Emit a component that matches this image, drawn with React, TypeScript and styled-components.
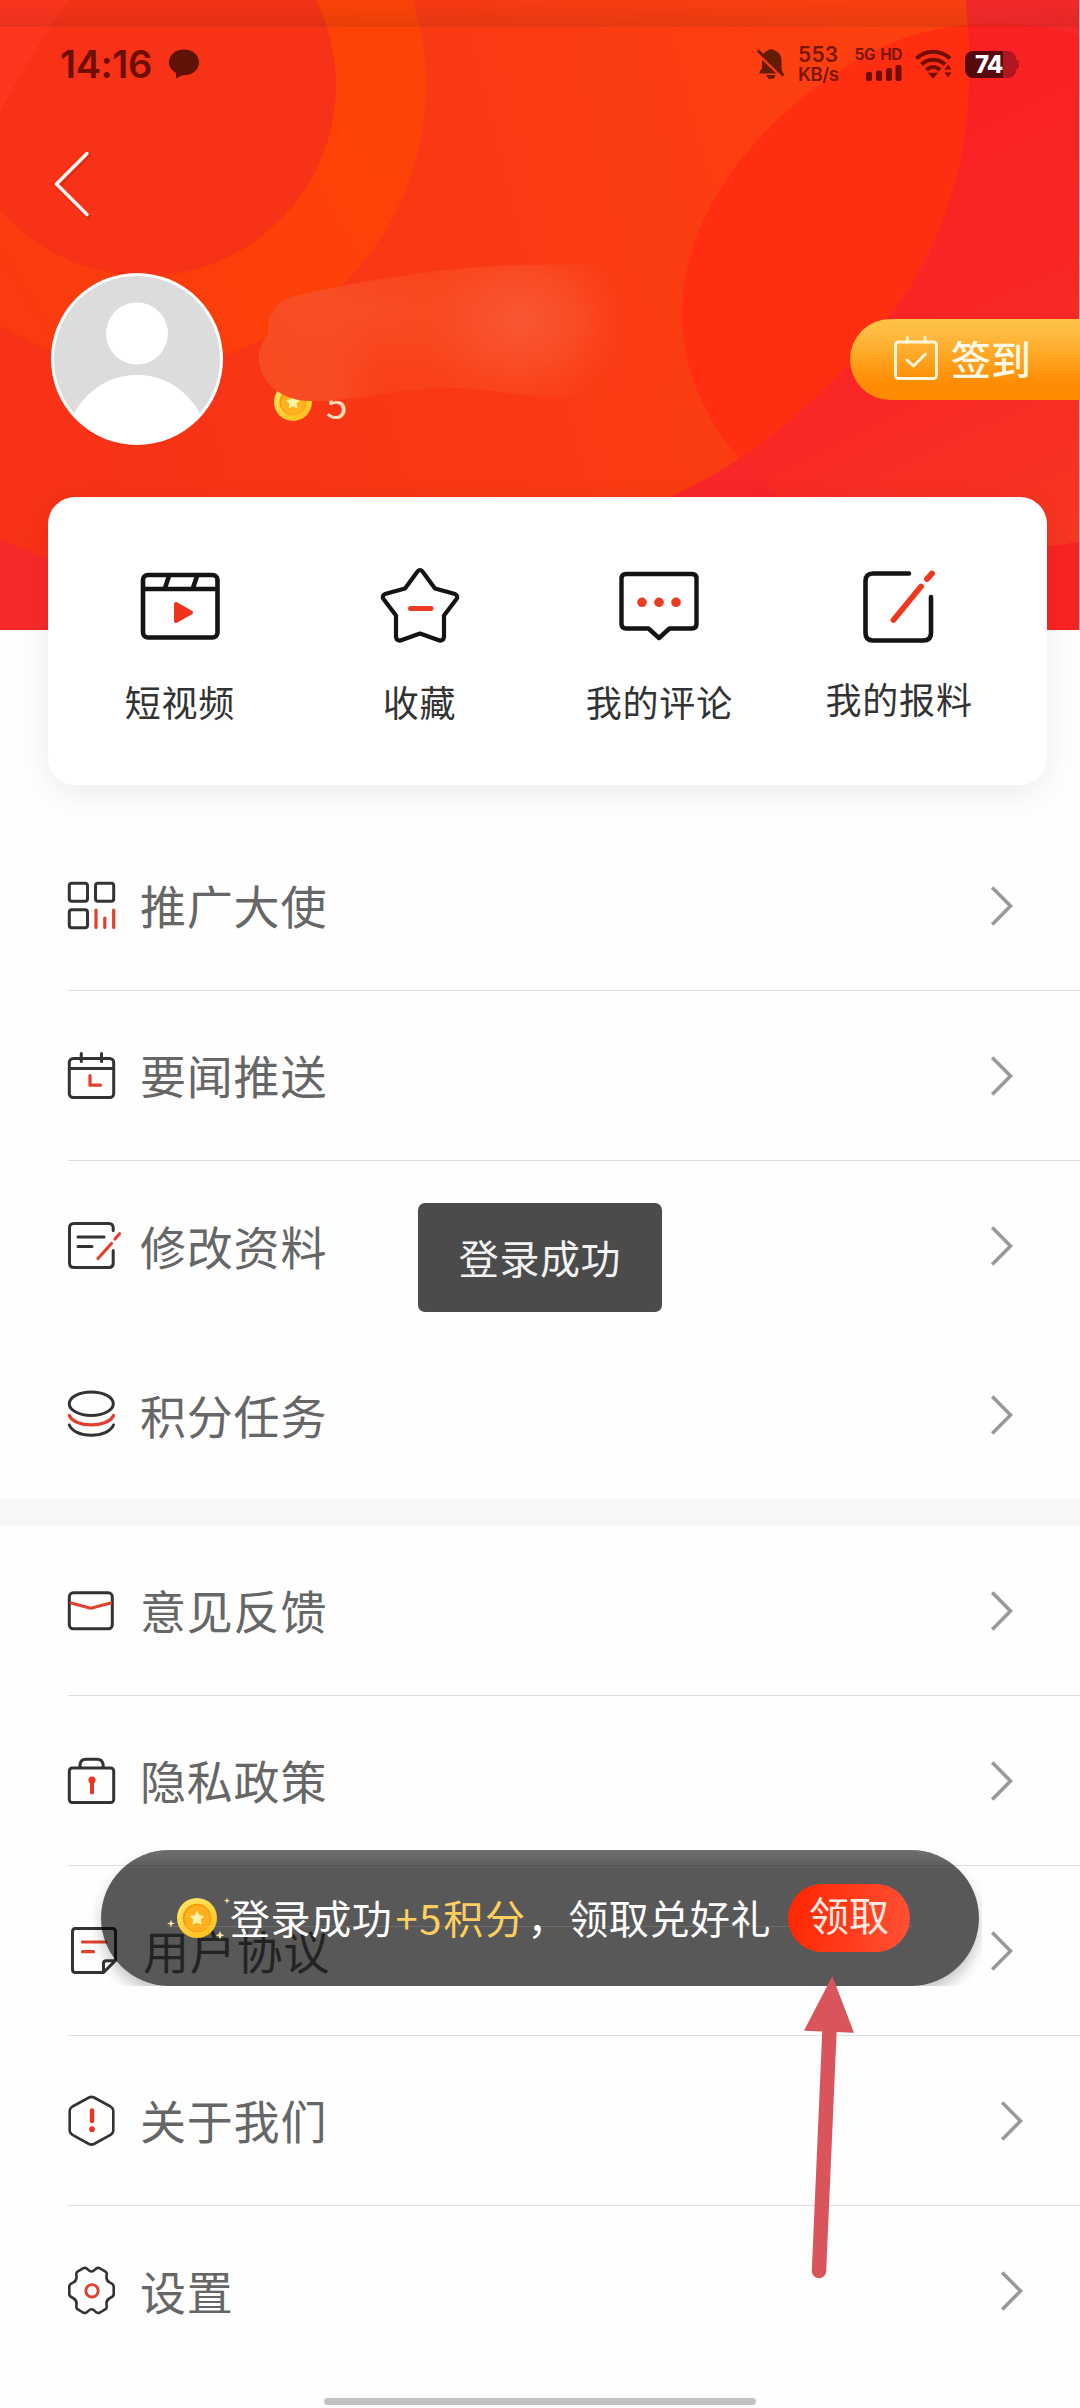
import React from "react";
import styled, { createGlobalStyle } from "styled-components";

const GlobalStyle = createGlobalStyle`
  * { box-sizing: border-box; }
  body {
    margin: 0;
    background: #fefefe;
    font-family: "Noto Sans CJK SC", "Noto Sans", sans-serif;
  }
  svg { display: block; overflow: visible; flex: none; }
`;

const Screen = styled.main`
  position: relative;
  width: 1080px;
  height: 2408px;
  overflow: hidden;
  background: #fefefe;
`;

/* ---------- header ---------- */

const Hero = styled.header`
  position: relative;
  width: 1080px;
  height: 630px;
`;

const HeroArt = styled.svg`
  position: absolute;
  left: 0;
  top: 0;
  overflow: hidden;
`;

const HeroContent = styled.div`
  position: relative;
  display: flex;
  flex-direction: column;
`;

const StatusBar = styled.div`
  height: 128px;
  padding: 0 61px 0 60px;
  display: flex;
  align-items: center;
  justify-content: space-between;
  font-family: Inter, "Noto Sans", sans-serif;
`;

const StatusGroup = styled.div<{ $gap: number }>`
  display: flex;
  align-items: center;
  gap: ${(p) => p.$gap}px;
`;

const Clock = styled.span`
  font-size: 38px;
  line-height: 38px;
  font-weight: 600;
  letter-spacing: -0.4px;
  color: #6f0f04;
`;

const Stack = styled.div<{ $width: number; $align: string }>`
  width: ${(p) => p.$width}px;
  display: flex;
  flex-direction: column;
  align-items: ${(p) => p.$align};
  gap: 3px;
  color: #7a1604;
`;

const Tiny = styled.span<{ $size: number; $line: number; $weight?: number; $track?: number }>`
  font-size: ${(p) => p.$size}px;
  line-height: ${(p) => p.$line}px;
  font-weight: ${(p) => p.$weight ?? 600};
  letter-spacing: ${(p) => p.$track ?? 0}px;
  word-spacing: 2px;
  white-space: nowrap;
`;

const Battery = styled.div`
  position: relative;
  width: 51px;
  height: 27px;
  margin-right: 3px;
  border-radius: 8px;
  background: linear-gradient(90deg, #560a0e 0 38px, #ae1620 38px);
  color: #fff;
  font-size: 24px;
  line-height: 28px;
  font-weight: 800;
  letter-spacing: -1px;
  padding-left: 10px;
  &::after {
    content: "";
    position: absolute;
    right: -3px;
    top: 9px;
    width: 3px;
    height: 9px;
    border-radius: 0 3px 3px 0;
    background: #ae1620;
  }
`;

const NavBar = styled.nav`
  height: 112px;
  padding-left: 54px;
  display: flex;
  align-items: center;
`;

const Profile = styled.section`
  height: 238px;
  padding-left: 51px;
  display: flex;
  align-items: center;
`;

const Account = styled.div`
  position: relative;
  align-self: stretch;
  margin-left: 51px;
  padding-top: 140px;
  flex: 1;
`;

const Points = styled.div`
  display: flex;
  align-items: center;
  gap: 14px;
  height: 44px;
  color: #ffdcb8;
  font-size: 39px;
  line-height: 44px;
`;

const Smudge = styled.svg`
  position: absolute;
  left: -17px;
  top: 20px;
`;

const SignIn = styled.button`
  width: 230px;
  height: 81px;
  border: 0;
  border-radius: 41px 0 0 41px;
  padding: 0 0 2px 44px;
  display: flex;
  align-items: center;
  gap: 13px;
  background: linear-gradient(180deg, #ffc24a 0%, #ffbb40 18%, #ff8d04 78%, #ff8a00 100%);
  color: #fff9e6;
  font-family: inherit;
  font-size: 40px;
  line-height: 44px;
  font-weight: 500;
`;

/* ---------- shortcut card ---------- */

const Card = styled.section`
  position: relative;
  margin: -133px 33px 0 48px;
  height: 288px;
  padding: 65px 28px 0 12px;
  border-radius: 27px;
  background: #fff;
  box-shadow: 0 8px 32px rgba(0, 0, 0, 0.075);
  display: grid;
  grid-template-columns: repeat(4, 1fr);
`;

const Shortcut = styled.div<{ $lift?: boolean }>`
  display: flex;
  flex-direction: column;
  align-items: center;
  gap: ${(p) => (p.$lift ? 34 : 37)}px;
  color: #333;
  font-size: 36px;
  line-height: 44px;
  letter-spacing: 0.8px;
  white-space: nowrap;
`;

/* ---------- menu ---------- */

const MenuGroup = styled.ul<{ $top?: number }>`
  list-style: none;
  margin: 0;
  padding: ${(p) => p.$top ?? 0}px 0 0 68px;
`;

const MenuRow = styled.li<{ $height: number; $divided: boolean; $inset: number }>`
  height: ${(p) => p.$height}px;
  padding-right: ${(p) => p.$inset}px;
  border-bottom: ${(p) => (p.$divided ? "1px solid #dedede" : "0")};
  display: flex;
  align-items: center;
`;

const MenuLabel = styled.span<{ $shift: number }>`
  flex: 1;
  padding-left: ${(p) => 24 + p.$shift}px;
  padding-bottom: 3px;
  color: #666;
  font-size: 46px;
  line-height: 56px;
  letter-spacing: 0.8px;
`;

const Spacer = styled.div`
  height: 27px;
  background: #f7f7f7;
`;

/* ---------- overlays ---------- */

const Toast = styled.div`
  position: absolute;
  left: 418px;
  top: 1203px;
  width: 244px;
  height: 109px;
  border-radius: 7px;
  background: #4b4b4b;
  color: #f2f2f2;
  display: flex;
  align-items: center;
  justify-content: center;
  font-size: 40px;
  letter-spacing: 0.6px;
  padding-bottom: 1px;
`;

const RewardClip = styled.div`
  position: absolute;
  left: 92px;
  top: 1850px;
  width: 890px;
  height: 136px;
  padding: 0 3px 0 9px;
  overflow: hidden;
`;

const Reward = styled.div`
  position: relative;
  height: 136px;
  border-radius: 68px;
  padding-left: 76px;
  display: flex;
  align-items: center;
  background: rgba(0, 0, 0, 0.655);
  box-shadow: 0 8px 14px rgba(0, 0, 0, 0.22);
  color: #fff;
  font-size: 40px;
  line-height: 48px;
  letter-spacing: 0.6px;
  white-space: nowrap;
  &::before {
    content: "";
    position: absolute;
    inset: 0;
    border-radius: 68px;
    background: linear-gradient(180deg, rgba(255, 255, 255, 0.14), rgba(255, 255, 255, 0) 21px);
  }
  &::after {
    content: "";
    position: absolute;
    left: 67px;
    right: 66px;
    top: 76px;
    height: 1px;
    background: rgba(255, 255, 255, 0.12);
  }
`;

const RewardText = styled.span`
  position: relative;
  z-index: 1;
  margin-left: 13px;
  padding-bottom: 3px;
  width: 558px;
`;

const Bonus = styled.em`
  font-style: normal;
  color: #ffcf5e;
  letter-spacing: 1.7px;
  margin: 0 1px 0 3px;
`;

const Claim = styled.button`
  position: relative;
  z-index: 1;
  width: 122px;
  height: 68px;
  border: 0;
  border-radius: 34px;
  padding: 0;
  background: linear-gradient(100deg, #ff2905 10%, #ff4f33 95%);
  color: #ffeae2;
  font-family: "Liberation Serif", "Noto Sans CJK SC", serif;
  font-size: 40px;
  line-height: 64px;
  font-weight: 400;
`;

const Pointer = styled.svg`
  position: absolute;
  left: 800px;
  top: 1972px;
`;

const HomeIndicator = styled.div`
  position: absolute;
  left: 324px;
  top: 2398px;
  width: 432px;
  height: 7px;
  border-radius: 4px;
  background: #c2c2c2;
`;

/* ---------- drawings ---------- */

const INK = "#333";
const RED = "#e0402c";

const Coin = ({ size }: { size: number }) => (
  <svg width={size} height={size} viewBox="0 0 40 40">
    <defs>
      <linearGradient id="coinRim" x1="0.2" y1="0" x2="0.8" y2="1">
        <stop offset="0" stopColor="#ffe866" />
        <stop offset="1" stopColor="#ffbd18" />
      </linearGradient>
    </defs>
    <circle cx="20" cy="20" r="20" fill="url(#coinRim)" />
    <circle cx="20" cy="20" r="14.2" fill="#f29a0c" />
    <circle cx="20.4" cy="20.6" r="13" fill="#ffb01c" />
    <path
      d="M20 13.6l2 4.100 4.500.7-3.200 3.200.8 4.500-4.100-2.100-4.100 2.100.8-4.500-3.200-3.200 4.500-.7z"
      fill="#fff3a6"
      stroke="#fff3a6"
      strokeWidth="1"
      strokeLinejoin="round"
    />
  </svg>
);

const Sparkles = styled.svg`
  position: absolute;
  left: 66px;
  top: 46px;
`;

const CardIcon = ({ children }: { children: React.ReactNode }) => (
  <svg width="80" height="80" viewBox="0 0 80 80" fill="none" stroke="#141414" strokeWidth="4.6" strokeLinecap="round" strokeLinejoin="round">
    {children}
  </svg>
);

const shortcuts = [
  {
    label: "短视频",
    icon: (
      <CardIcon>
        <rect x="3" y="13" width="74.500" height="62.500" rx="5" />
        <path d="M3 27H77M29 14L25 26M57 14L53 26" />
        <path d="M36 42L51 50.500 36 59z" fill="#f0341c" stroke="#f0341c" strokeWidth="4" />
      </CardIcon>
    ),
  },
  {
    label: "收藏",
    icon: (
      <CardIcon>
        <path d="M37.500 9.500Q40 6.500 42.500 9.500L55 26.500 75 32Q78.500 34 76.500 37L64 53.500V75Q63.500 79 59.500 78.500L40 71.500 20.500 78.500Q16.500 79 16 75V53.500L3.500 37Q1.500 34 5 32L25 26.500z" strokeWidth="4.200" />
        <path d="M30.500 46.500H51" stroke="#e93c22" strokeWidth="5" />
      </CardIcon>
    ),
  },
  {
    label: "我的评论",
    icon: (
      <CardIcon>
        <path d="M7 12H73Q77.500 12 77.500 16.500V62Q77.500 66.500 73 66.500H50.500L40 76 29.500 66.500H7Q2.500 66.500 2.500 62V16.500Q2.500 12 7 12z" strokeWidth="4.400" />
        <g fill="#e93c22" stroke="none">
          <circle cx="23" cy="40.300" r="4.800" />
          <circle cx="40" cy="40.300" r="4.800" />
          <circle cx="57" cy="40.300" r="4.800" />
        </g>
      </CardIcon>
    ),
  },
  {
    label: "我的报料",
    lift: true,
    icon: (
      <CardIcon>
        <path d="M50 11.500H14Q6.500 11.500 6.500 19V71Q6.500 78.500 14 78.500H64.500Q72 78.500 72 71V35" />
        <path d="M34.500 58L62 24.500M68 17L73 11.500" stroke="#f0381e" strokeWidth="5.800" />
      </CardIcon>
    ),
  },
];

const RowIcon = ({ children }: { children: React.ReactNode }) => (
  <svg width="48" height="50" viewBox="0 0 48 50" fill="none" stroke={INK} strokeWidth="3" strokeLinecap="round" strokeLinejoin="round">
    {children}
  </svg>
);

const Chevron = () => (
  <svg width="22" height="40" viewBox="0 0 22 40" fill="none" stroke="#999" strokeWidth="3.600">
    <path d="M1.200 1.500L19.500 20 1.200 38.500" />
  </svg>
);

type Item = {
  label: string;
  icon: React.ReactNode;
  divided?: boolean;
  height?: number;
  inset?: number;
  shift?: number;
};

const firstGroup: Item[] = [
  {
    label: "推广大使",
    divided: true,
    icon: (
      <RowIcon>
        <rect x="1.300" y="2.300" width="18.200" height="18" rx="2.500" />
        <rect x="27.500" y="2.300" width="18.200" height="18" rx="2.500" />
        <rect x="1.300" y="28.800" width="18.200" height="18" rx="2.500" />
        <path d="M28 29V46.500M36.800 37V46.500M45.700 29V46.500" stroke={RED} strokeWidth="3.200" />
      </RowIcon>
    ),
  },
  {
    label: "要闻推送",
    divided: true,
    icon: (
      <RowIcon>
        <rect x="1.300" y="7.500" width="44.400" height="39" rx="4" />
        <path d="M1.500 17.500H45.500M13.300 2.500V10.500M33.500 2.500V10.500" />
        <path d="M22 24.500V34.200H32.500" stroke={RED} strokeWidth="3.200" />
      </RowIcon>
    ),
  },
  {
    label: "修改资料",
    icon: (
      <RowIcon>
        <path d="M45.200 9.500V7Q45.200 2.500 40.700 2.500H6Q1.500 2.500 1.500 7V42Q1.500 46.500 6 46.500H40.700Q45.200 46.500 45.200 42V29.500M10 16H36M10 25.500H24" />
        <path d="M30 37.500L43.500 22.500M47 18L51.500 12.800" stroke={RED} strokeWidth="3.200" />
      </RowIcon>
    ),
  },
  {
    label: "积分任务",
    height: 168,
    icon: (
      <RowIcon>
        <ellipse cx="23.300" cy="13.700" rx="22" ry="11.800" />
        <path d="M1.300 25.500C4 31.500 13 34.800 23.300 34.800S42.800 31.500 45.500 25.500" stroke={RED} strokeWidth="3.200" />
        <path d="M1.300 35C4 41.500 13 45.200 23.300 45.200S42.800 41.500 45.500 35" />
      </RowIcon>
    ),
  },
];

const secondGroup: Item[] = [
  {
    label: "意见反馈",
    divided: true,
    icon: (
      <RowIcon>
        <rect x="1.300" y="6.800" width="43" height="36" rx="4" />
        <path d="M3 17L22.800 22.200 42.800 17" stroke={RED} />
      </RowIcon>
    ),
  },
  {
    label: "隐私政策",
    divided: true,
    icon: (
      <RowIcon>
        <rect x="1.300" y="12" width="44.400" height="34.500" rx="3" />
        <path d="M12 11.500V9Q12.500 3.200 18 3.200H29Q34.500 3.200 35.200 9V11.500" />
        <circle cx="24" cy="24" r="3.600" fill="#e5371f" stroke="none" />
        <path d="M24 25V36.500" stroke="#e5371f" strokeWidth="4" />
      </RowIcon>
    ),
  },
  {
    label: "用户协议",
    divided: true,
    shift: 3,
    icon: (
      <RowIcon>
        <path d="M34.500 46.500H7.500Q4.500 46.500 4.500 43.500V5.500Q4.500 2.500 7.500 2.500H44.500Q47.500 2.500 47.500 5.500V34.500L35.500 46.500V37.500Q35.500 34.800 38.500 34.800H47" />
        <path d="M14.500 16H38M14.500 25.700H25.500" stroke={RED} strokeWidth="3.200" />
      </RowIcon>
    ),
  },
  {
    label: "关于我们",
    divided: true,
    inset: 57,
    icon: (
      <RowIcon>
        <path d="M21 1.500Q23.500 .3 26 1.500L42.500 10.500Q45.300 12.300 45.300 15V34.500Q45.300 37 42.500 38.800L26 48Q23.500 49.200 21 48L4.500 38.800Q1.700 37 1.700 34.500V15Q1.700 12.300 4.500 10.500z" strokeWidth="2.600" />
        <path d="M24 14.500V25" stroke="#e5371f" strokeWidth="4.400" />
        <circle cx="24" cy="33.200" r="2.900" fill="#e5371f" stroke="none" />
      </RowIcon>
    ),
  },
  {
    label: "设置",
    inset: 57,
    icon: (
      <RowIcon>
        <path
          d="M23.500 5.500C20.800 5.500 20 3 17.800 2Q16.500 1.600 15 2.400L9.500 5.600Q8 6.500 8.300 8.500C9 12 8.500 15 5 16.600Q1.500 18 1.300 20.500V28.500Q1.500 30.500 5 32C8.500 33.800 9 37 8.300 40Q8 42.500 9.500 43.200L15 46.500Q16.500 47.300 17.800 46.700C20 46 20.800 43.300 23.500 43.300S27 46 29.200 46.700Q30.500 47.300 32 46.500L37.500 43.200Q39 42.500 38.700 40C38 37 38.500 33.800 42 32Q45.500 30.500 45.700 28.500V20.500Q45.500 18 42 16.600C38.500 15 38 12 38.700 8.500Q39 6.500 37.500 5.600L32 2.400Q30.500 1.600 29.200 2C27 3 26.200 5.500 23.500 5.500z"
          strokeWidth="2.600"
        />
        <circle cx="24" cy="24.800" r="6.200" stroke={RED} strokeWidth="2.900" />
      </RowIcon>
    ),
  },
];

const Menu = ({ items, top }: { items: Item[]; top?: number }) => (
  <MenuGroup $top={top}>
    {items.map((item) => (
      <MenuRow key={item.label} $height={item.height ?? 170} $divided={!!item.divided} $inset={item.inset ?? 67}>
        {item.icon}
        <MenuLabel $shift={item.shift ?? 0}>{item.label}</MenuLabel>
        <Chevron />
      </MenuRow>
    ))}
  </MenuGroup>
);

const HeroBackdrop = () => (
  <HeroArt width="1080" height="630" viewBox="0 0 1080 630">
    <defs>
      <linearGradient id="base" x1="0" y1="0" x2="1" y2="0.6">
        <stop offset="0" stopColor="#f52a26" />
        <stop offset="0.7" stopColor="#f6292c" />
        <stop offset="1" stopColor="#fa2324" />
      </linearGradient>
      <linearGradient id="disc" gradientUnits="userSpaceOnUse" x1="60" y1="300" x2="900" y2="80">
        <stop offset="0" stopColor="#f73217" />
        <stop offset="0.6" stopColor="#fa3b12" />
        <stop offset="1" stopColor="#fd400f" />
      </linearGradient>
      <linearGradient id="side" gradientUnits="userSpaceOnUse" x1="850" y1="100" x2="1060" y2="540">
        <stop offset="0" stopColor="#fb2022" />
        <stop offset="0.5" stopColor="#f92626" />
        <stop offset="1" stopColor="#f73620" />
      </linearGradient>
      <linearGradient id="ring" gradientUnits="userSpaceOnUse" x1="0" y1="330" x2="400" y2="80">
        <stop offset="0" stopColor="#fa3a10" />
        <stop offset="0.6" stopColor="#fd4008" />
        <stop offset="1" stopColor="#fe4307" />
      </linearGradient>
      <linearGradient id="shade" x1="0" y1="0" x2="0" y2="1">
        <stop offset="0" stopColor="#7a2a10" stopOpacity="0.02" />
        <stop offset="1" stopColor="#7a2a10" stopOpacity="0.17" />
      </linearGradient>
      <clipPath id="discClip">
        <path d="M-60 -40H960C972 30 972 100 960 160C940 250 905 300 865 345C800 420 740 465 668 498C500 600 250 640 48 558L0 540L-60 510z" />
      </clipPath>
    </defs>
    <rect width="1079" height="630" fill="url(#base)" />
    <path
      d="M1100 45C1060 20 960 12 887 45C780 95 682 200 682 314C682 390 725 455 782 498C860 556 980 564 1100 537z"
      fill="url(#side)"
    />
    <g clipPath="url(#discClip)">
      <rect width="1080" height="630" fill="url(#disc)" />
      <path d="M1100 45C1060 20 960 12 887 45C780 95 682 200 682 314C682 390 725 455 782 498C860 556 980 564 1100 537z" fill="#ff2c10" fillOpacity="0.85" />
    </g>
    <circle cx="145" cy="85" r="281" fill="url(#ring)" />
    <circle cx="145" cy="85" r="191" fill="#f73217" />
    <path d="M0 0H69Q30 55 0 112z" fill="#ff351f" />
    <rect width="1079" height="27" fill="url(#shade)" />
    <rect x="1079" width="1" height="630" fill="#d6b4b2" />
  </HeroArt>
);

export default function App() {
  return (
    <Screen>
      <GlobalStyle />
      <Hero>
        <HeroBackdrop />
        <HeroContent>
          <StatusBar>
            <StatusGroup $gap={17}>
              <Clock>14:16</Clock>
              <svg width="30" height="30" viewBox="0 0 30 30" fill="#601206">
                <path d="M15 .5C6.500 .5 0 6 0 13.200c0 4.500 2.600 8.200 7 10.600V29.500l6-3.300c9.500.8 17-5 17-13C30 6 23.500.5 15 .5z" />
              </svg>
            </StatusGroup>
            <StatusGroup $gap={13}>
              <svg width="28" height="32" viewBox="0 0 28 32">
                <path d="M2.500 25.500V23.500L5 20.500V12C5 6 8 3.500 11 2.500C12 .8 16 .8 17.500 2.500C22 4 24.500 7.500 24.500 12V20.500L26 25.500z" fill="#651c06" />
                <path d="M9.500 27H18.500Q18 31 14 31T9.500 27z" fill="#651c06" />
                <path d="M-1.500 2.500L26 29" stroke="#fb3c12" strokeWidth="4.400" />
                <path d="M.8 2.500L26.500 27.500" stroke="#651c06" strokeWidth="2.800" />
              </svg>
              <Stack $width={43} $align="flex-start">
                <Tiny $size={21} $line={17} $weight={600} $track={0.2}>553</Tiny>
                <Tiny $size={18.500} $line={16} $weight={600} $track={-0.500}>KB/s</Tiny>
              </Stack>
              <Stack $width={48} $align="flex-end">
                <Tiny $size={15.500} $line={14} $weight={700} $track={-0.500}>5G HD</Tiny>
                <svg width="36" height="16" viewBox="0 0 36 16" fill="#6d0f04">
                  <rect x="0" y="7" width="6" height="9" rx="2" />
                  <rect x="10" y="5.500" width="6" height="10.500" rx="2" />
                  <rect x="20" y="3" width="6" height="13" rx="2" />
                  <rect x="29.500" y="0" width="6" height="16" rx="2" />
                </svg>
              </Stack>
              <svg width="37" height="30" viewBox="0 0 37 30" fill="none" stroke="#750c04" strokeWidth="4">
                <path d="M1.500 9.500C11 .5 25 .5 35 9.500" />
                <path d="M6.500 15.500C13 9 23.500 9 30 15.500" />
                <path d="M11.500 21C15.500 17 21 17 25 21" />
                <path d="M14.500 24.500H21.500L18 28.500z" fill="#750c04" stroke="#750c04" strokeWidth="1.500" />
                <path d="M33 15.500L36.500 20.500H29.500zM33 28.500L36.500 23.500H29.500z" fill="#750c04" stroke="none" />
              </svg>
              <Battery>74</Battery>
            </StatusGroup>
          </StatusBar>
          <NavBar>
            <svg width="36" height="66" viewBox="0 0 36 66" fill="none" strokeLinecap="round" strokeLinejoin="round">
              <path d="M34.500 4L4 35 34.500 66" stroke="#a02010" strokeOpacity="0.3" strokeWidth="5" />
              <path d="M33 2.500L2.500 33 33 63.500" stroke="#fff8f4" strokeWidth="3.400" />
            </svg>
          </NavBar>
          <Profile>
            <svg width="172" height="172" viewBox="0 0 172 172">
              <defs>
                <clipPath id="face">
                  <circle cx="86" cy="86" r="84" />
                </clipPath>
              </defs>
              <circle cx="86" cy="86" r="86" fill="#fff" />
              <circle cx="86" cy="86" r="83" fill="#dcdcdc" />
              <g fill="#fff" clipPath="url(#face)">
                <circle cx="86" cy="60.500" r="31" />
                <circle cx="86" cy="172.500" r="70.500" />
              </g>
            </svg>
            <Account>
              <Points>
                <Coin size={38} />
                5
              </Points>
              <Smudge width="420" height="145" viewBox="257 260 420 145">
                <defs>
                  <linearGradient id="smear" gradientUnits="userSpaceOnUse" x1="259" y1="0" x2="672" y2="0">
                    <stop offset="0" stopColor="#f74c22" />
                    <stop offset="0.18" stopColor="#f84b23" />
                    <stop offset="0.3" stopColor="#f84019" />
                    <stop offset="0.5" stopColor="#f94219" />
                    <stop offset="0.75" stopColor="#fa3e15" stopOpacity="0.9" />
                    <stop offset="0.88" stopColor="#fa3a13" stopOpacity="0.5" />
                    <stop offset="1" stopColor="#fa3a13" stopOpacity="0.4" />
                  </linearGradient>
                  <radialGradient id="glow" gradientUnits="userSpaceOnUse" cx="0" cy="0" r="1" gradientTransform="translate(520 320) scale(110 88)">
                    <stop offset="0" stopColor="#f95734" />
                    <stop offset="0.5" stopColor="#f9502b" stopOpacity="0.75" />
                    <stop offset="1" stopColor="#fa4a20" stopOpacity="0" />
                  </radialGradient>
                  <radialGradient id="haze" gradientUnits="userSpaceOnUse" cx="0" cy="0" r="1" gradientTransform="translate(370 310) scale(200 72)">
                    <stop offset="0" stopColor="#f94f27" stopOpacity="0.85" />
                    <stop offset="1" stopColor="#f94a22" stopOpacity="0" />
                  </radialGradient>
                  <clipPath id="smearClip">
                    <path d="M268 333C268 312 276 302 296 296C350 282 440 268 513 265L603 264C625 268 636 285 640 305C662 320 676 340 672 362C668 392 650 400 600 398H558C520 396 480 387 446 388C400 388 350 402 312 401C285 402 262 385 259 362C258 350 263 342 268 333z" />
                  </clipPath>
                </defs>
                <g clipPath="url(#smearClip)">
                  <rect x="250" y="260" width="430" height="145" fill="url(#smear)" />
                  <rect x="250" y="260" width="430" height="145" fill="url(#haze)" />
                  <rect x="250" y="260" width="430" height="145" fill="url(#glow)" />
                </g>
              </Smudge>
            </Account>
            <SignIn>
              <svg width="44" height="44" viewBox="0 0 44 44" fill="none" stroke="#fff6da" strokeWidth="3" strokeLinecap="round" strokeLinejoin="round">
                <rect x="1.500" y="6" width="41" height="36.500" rx="3" />
                <path d="M13.500 1.500V6M31 1.500V6" />
                <path d="M13 24L19.500 30 31.500 18" />
              </svg>
              签到
            </SignIn>
          </Profile>
        </HeroContent>
      </Hero>

      <Card>
        {shortcuts.map((s) => (
          <Shortcut key={s.label} $lift={s.lift}>
            {s.icon}
            <span>{s.label}</span>
          </Shortcut>
        ))}
      </Card>

      <Menu items={firstGroup} top={36} />
      <Spacer />
      <Menu items={secondGroup} />

      <Toast>登录成功</Toast>

      <RewardClip>
        <Reward>
          <Coin size={40} />
          <Sparkles width="70" height="44" viewBox="0 0 70 44" fill="#ffe2a8">
            <path d="M4 23.500l1 3 3 1-3 1-1 3-1-3-3-1 3-1z" />
            <path d="M60 1.500l.8 2.500 2.500.8-2.500.8-.8 2.500-.8-2.500-2.500-.8 2.500-.8z" />
            <path d="M53 35l1.200 3 3 1.200-3 1.200-1.200 3-1.200-3-3-1.200 3-1.200z" />
          </Sparkles>
          <RewardText>
            登录成功<Bonus>+5积分</Bonus>，领取兑好礼
          </RewardText>
          <Claim>领取</Claim>
        </Reward>
      </RewardClip>

      <Pointer width="60" height="310" viewBox="800 1972 60 310">
        <path d="M829.500 2030L819 2271" stroke="#da555b" strokeWidth="14.400" strokeLinecap="round" />
        <path d="M832.300 1976L854 2032.700 804 2030.700z" fill="#da555b" />
      </Pointer>

      <HomeIndicator />
    </Screen>
  );
}
